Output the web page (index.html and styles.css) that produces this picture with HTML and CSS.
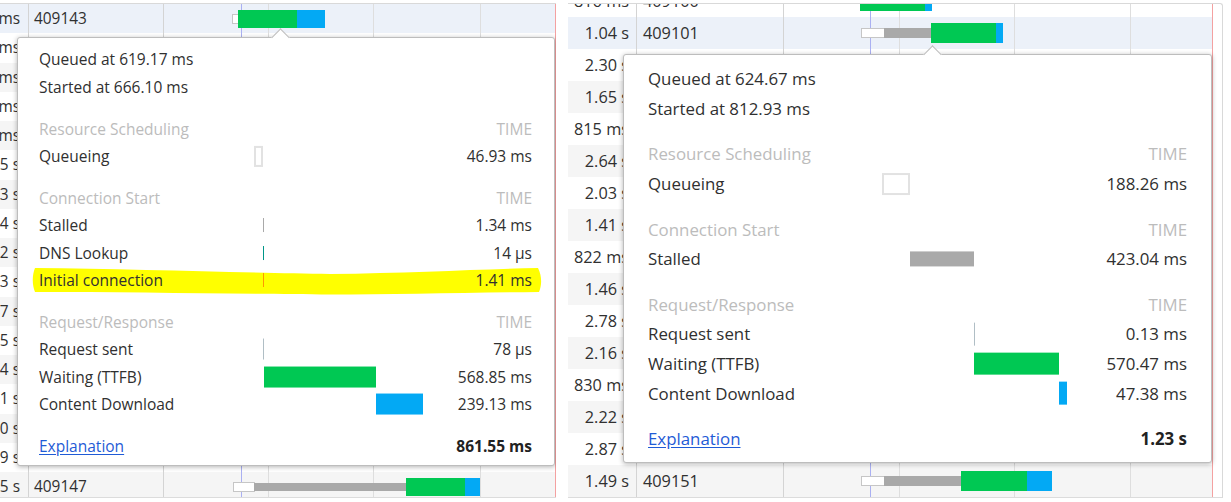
FILE: index.html
```html
<!DOCTYPE html>
<html lang="en">
<head>
<meta charset="utf-8">
<title>Network timing tooltips</title>
<link rel="stylesheet" href="styles.css">
</head>
<body>
<div class="stage">

  <section class="shot shot-a">
    <div class="rows">
      <div class="row hov">
        <div class="c-time"><span>626 ms</span></div>
        <div class="c-name">409143</div>
        <div class="c-fall">
          <i class="wb wb-q" style="left:68px;width:7px"></i>
          <i class="wb wb-w" style="left:74px;width:59px"></i>
          <i class="wb wb-d" style="left:133px;width:28px"></i>
        </div>
      </div>
      <div class="row"><div class="c-time"><span>571 ms</span></div><div class="c-name"></div><div class="c-fall"></div></div>
      <div class="row z"><div class="c-time"><span>703 ms</span></div><div class="c-name"></div><div class="c-fall"></div></div>
      <div class="row"><div class="c-time"><span>688 ms</span></div><div class="c-name"></div><div class="c-fall"></div></div>
      <div class="row z"><div class="c-time"><span>912 ms</span></div><div class="c-name"></div><div class="c-fall"></div></div>
      <div class="row"><div class="c-time"><span>1.25 s</span></div><div class="c-name"></div><div class="c-fall"></div></div>
      <div class="row z"><div class="c-time"><span>1.73 s</span></div><div class="c-name"></div><div class="c-fall"></div></div>
      <div class="row"><div class="c-time"><span>1.34 s</span></div><div class="c-name"></div><div class="c-fall"></div></div>
      <div class="row z"><div class="c-time"><span>1.52 s</span></div><div class="c-name"></div><div class="c-fall"></div></div>
      <div class="row"><div class="c-time"><span>1.63 s</span></div><div class="c-name"></div><div class="c-fall"></div></div>
      <div class="row z"><div class="c-time"><span>1.47 s</span></div><div class="c-name"></div><div class="c-fall"></div></div>
      <div class="row"><div class="c-time"><span>1.25 s</span></div><div class="c-name"></div><div class="c-fall"></div></div>
      <div class="row z"><div class="c-time"><span>1.14 s</span></div><div class="c-name"></div><div class="c-fall"></div></div>
      <div class="row"><div class="c-time"><span>1.21 s</span></div><div class="c-name"></div><div class="c-fall"></div></div>
      <div class="row z"><div class="c-time"><span>1.30 s</span></div><div class="c-name"></div><div class="c-fall"></div></div>
      <div class="row"><div class="c-time"><span>1.09 s</span></div><div class="c-name"></div><div class="c-fall"></div></div>
      <div class="row z">
        <div class="c-time"><span>1.45 s</span></div>
        <div class="c-name">409147</div>
        <div class="c-fall">
          <i class="wb wb-q" style="left:69px;width:22px"></i>
          <i class="wb wb-s" style="left:90px;width:152px"></i>
          <i class="wb wb-w" style="left:242px;width:59px"></i>
          <i class="wb wb-d" style="left:301px;width:15px"></i>
        </div>
      </div>
    </div>

    <div class="tip">
      <span class="tip-arrow"></span>
      <svg class="hl" width="510" height="30" viewBox="0 0 510 30" aria-hidden="true">
        <path d="M3 1 C 100 2, 220 6, 298 7 C 380 6, 450 2, 506 1 C 510 9, 510 18, 507 25 C 440 25.5, 360 27.5, 298 27.5 C 220 27, 100 25, 3 25 C 0 18, 0 8, 3 1 Z" fill="#ffff00"/>
      </svg>
      <div class="tl">Queued at 619.17 ms</div>
      <div class="tl">Started at 666.10 ms</div>

      <div class="tr sec"><span class="lab">Resource Scheduling</span><span></span><span class="v">TIME</span></div>
      <div class="tr"><span class="lab">Queueing</span><span class="tb"><i class="tbar q" style="left:0%;width:5.447%"></i></span><span class="v">46.93 ms</span></div>

      <div class="tr sec"><span class="lab">Connection Start</span><span></span><span class="v">TIME</span></div>
      <div class="tr"><span class="lab">Stalled</span><span class="tb"><i class="tbar s" style="left:5.2%;width:0.156%"></i></span><span class="v">1.34 ms</span></div>
      <div class="tr"><span class="lab">DNS Lookup</span><span class="tb"><i class="tbar dns" style="left:5.25%;width:0.002%"></i></span><span class="v">14 µs</span></div>
      <div class="tr"><span class="lab">Initial connection</span><span class="tb"><i class="tbar con" style="left:5.25%;width:0.164%"></i></span><span class="v">1.41 ms</span></div>

      <div class="tr sec"><span class="lab">Request/Response</span><span></span><span class="v">TIME</span></div>
      <div class="tr"><span class="lab">Request sent</span><span class="tb"><i class="tbar req" style="left:5.5%;width:0.009%"></i></span><span class="v">78 µs</span></div>
      <div class="tr"><span class="lab">Waiting (TTFB)</span><span class="tb"><i class="tbar w" style="left:5.777%;width:66.027%"></i></span><span class="v">568.85 ms</span></div>
      <div class="tr"><span class="lab">Content Download</span><span class="tb"><i class="tbar d" style="left:71.804%;width:27.756%"></i></span><span class="v">239.13 ms</span></div>

      <div class="tr foot"><a class="lab link" href="#">Explanation</a><span></span><span class="v tot">861.55 ms</span></div>
    </div>
  </section>

  <div class="gap"></div>

  <section class="shot shot-b">
    <div class="rows">
      <div class="row part">
        <div class="c-time"><span>816 ms</span></div>
        <div class="c-name">409100</div>
        <div class="c-fall">
          <i class="wb wb-w" style="left:76px;width:65px"></i>
          <i class="wb wb-d" style="left:141px;width:7px"></i>
        </div>
      </div>
      <div class="row hov">
        <div class="c-time"><span>1.04 s</span></div>
        <div class="c-name">409101</div>
        <div class="c-fall">
          <i class="wb wb-q" style="left:77px;width:24px"></i>
          <i class="wb wb-s" style="left:100px;width:47px"></i>
          <i class="wb wb-w" style="left:147px;width:65px"></i>
          <i class="wb wb-d" style="left:212px;width:7px"></i>
        </div>
      </div>
      <div class="row"><div class="c-time"><span>2.30 s</span></div><div class="c-name"></div><div class="c-fall"></div></div>
      <div class="row z"><div class="c-time"><span>1.65 s</span></div><div class="c-name"></div><div class="c-fall"></div></div>
      <div class="row"><div class="c-time"><span>815 ms</span></div><div class="c-name"></div><div class="c-fall"></div></div>
      <div class="row z"><div class="c-time"><span>2.64 s</span></div><div class="c-name"></div><div class="c-fall"></div></div>
      <div class="row"><div class="c-time"><span>2.03 s</span></div><div class="c-name"></div><div class="c-fall"></div></div>
      <div class="row z"><div class="c-time"><span>1.41 s</span></div><div class="c-name"></div><div class="c-fall"></div></div>
      <div class="row"><div class="c-time"><span>822 ms</span></div><div class="c-name"></div><div class="c-fall"></div></div>
      <div class="row z"><div class="c-time"><span>1.46 s</span></div><div class="c-name"></div><div class="c-fall"></div></div>
      <div class="row"><div class="c-time"><span>2.78 s</span></div><div class="c-name"></div><div class="c-fall"></div></div>
      <div class="row z"><div class="c-time"><span>2.16 s</span></div><div class="c-name"></div><div class="c-fall"></div></div>
      <div class="row"><div class="c-time"><span>830 ms</span></div><div class="c-name"></div><div class="c-fall"></div></div>
      <div class="row z"><div class="c-time"><span>2.22 s</span></div><div class="c-name"></div><div class="c-fall"></div></div>
      <div class="row"><div class="c-time"><span>2.87 s</span></div><div class="c-name"></div><div class="c-fall"></div></div>
      <div class="row z">
        <div class="c-time"><span>1.49 s</span></div>
        <div class="c-name">409151</div>
        <div class="c-fall">
          <i class="wb wb-q" style="left:77px;width:24px"></i>
          <i class="wb wb-s" style="left:100px;width:77px"></i>
          <i class="wb wb-w" style="left:177px;width:66px"></i>
          <i class="wb wb-d" style="left:243px;width:25px"></i>
        </div>
      </div>
    </div>

    <div class="tip">
      <span class="tip-arrow"></span>
      <div class="tl">Queued at 624.67 ms</div>
      <div class="tl">Started at 812.93 ms</div>

      <div class="tr sec"><span class="lab">Resource Scheduling</span><span></span><span class="v">TIME</span></div>
      <div class="tr"><span class="lab">Queueing</span><span class="tb"><i class="tbar q" style="left:0%;width:15.315%"></i></span><span class="v">188.26 ms</span></div>

      <div class="tr sec"><span class="lab">Connection Start</span><span></span><span class="v">TIME</span></div>
      <div class="tr"><span class="lab">Stalled</span><span class="tb"><i class="tbar s" style="left:15.315%;width:34.413%"></i></span><span class="v">423.04 ms</span></div>

      <div class="tr sec"><span class="lab">Request/Response</span><span></span><span class="v">TIME</span></div>
      <div class="tr"><span class="lab">Request sent</span><span class="tb"><i class="tbar req" style="left:49.728%;width:0.0106%"></i></span><span class="v">0.13 ms</span></div>
      <div class="tr"><span class="lab">Waiting (TTFB)</span><span class="tb"><i class="tbar w" style="left:49.739%;width:46.407%"></i></span><span class="v">570.47 ms</span></div>
      <div class="tr"><span class="lab">Content Download</span><span class="tb"><i class="tbar d" style="left:96.146%;width:3.854%"></i></span><span class="v">47.38 ms</span></div>

      <div class="tr foot"><a class="lab link" href="#">Explanation</a><span></span><span class="v tot">1.23 s</span></div>
    </div>
  </section>

</div>
</body>
</html>
```

FILE: styles.css
```css
* {
  box-sizing: border-box;
  margin: 0;
  padding: 0;
}

html,
body {
  background: #ffffff;
}

body {
  width: 1231px;
  height: 502px;
  overflow: hidden;
  font-family: "Open Sans", "Noto Sans", "DejaVu Sans", sans-serif;
  color: #303030;
}

.stage {
  display: flex;
  align-items: flex-start;
  padding-top: 3px;
}

.gap {
  flex: none;
  width: 12px;
}

/* ---------- screenshot panels ---------- */

.shot {
  position: relative;
  flex: none;
  height: 495px;
  border-top: 1px solid #d9d9d9;
  border-bottom: 1px solid #dcdcdc;
  overflow: hidden;
}

.shot-a {
  width: 556px;
  font-size: 15.4px;
  --rh: 29.25px;
  --big: 18px;
  --thin: 8px;
  --qb: 10px;
}

.shot-b {
  width: 655px;
  padding-right: 9px;
  border-right: 1px solid #d9d9d9;
  border-top-right-radius: 3px;
  font-size: 16.3px;
  --rh: 32px;
  --big: 20px;
  --thin: 10px;
  --qb: 10px;
}

.rows {
  display: flex;
  flex-direction: column;
}

.row {
  display: flex;
  flex: none;
  height: var(--rh);
  background: #ffffff;
}

.row.z {
  background: #f5f5f5;
}

.row.hov {
  background: #ecf1f9;
}

.row.part {
  margin-top: -19px;
}

.c-time {
  display: flex;
  flex: none;
  justify-content: flex-end;
  align-items: center;
  white-space: nowrap;
  overflow: hidden;
  border-right: 1px solid #d4d4d4;
}

.c-name {
  display: flex;
  flex: none;
  align-items: center;
  white-space: nowrap;
  overflow: hidden;
  border-right: 1px solid #d4d4d4;
}

.c-fall {
  position: relative;
  flex: 1;
}

.shot-a .c-time {
  width: 29px;
  padding-right: 8px;
}

.shot-a .c-name {
  width: 135px;
  padding-left: 5px;
}

.shot-a .c-fall {
  background-image: linear-gradient(to right,
      transparent 0 77px,
      #aab0f2 77px 78px,
      transparent 78px 104px,
      #dedede 104px 105px,
      transparent 105px 209px,
      #dedede 209px 210px,
      transparent 210px 316px,
      #dedede 316px 317px,
      transparent 317px 391px,
      #f4a1a1 391px 392px);
}

.shot-b .c-time {
  width: 69px;
  padding-right: 7px;
}

.shot-b .c-name {
  width: 147px;
  padding-left: 6px;
}

.shot-b .c-fall {
  flex: none;
  width: 429px;
  background-image: linear-gradient(to right,
      transparent 0 86px,
      #aab0f2 86px 87px,
      transparent 87px 115px,
      #dedede 115px 116px,
      transparent 116px 230px,
      #dedede 230px 231px,
      transparent 231px 346px,
      #dedede 346px 347px,
      transparent 347px 428px,
      #f4a1a1 428px 429px);
}

/* waterfall bars */
.wb {
  position: absolute;
  top: 50%;
  display: block;
}

.wb-q {
  height: var(--qb);
  transform: translateY(-50%);
  background: #ffffff;
  border: 1px solid #c6c6c6;
}

.wb-s {
  height: var(--thin);
  transform: translateY(-50%);
  background: #a9a9a9;
}

.wb-w {
  height: var(--big);
  transform: translateY(-50%);
  background: #00c853;
}

.wb-d {
  height: var(--big);
  transform: translateY(-50%);
  background: #03a9f4;
}

/* ---------- tooltip ---------- */

.tip {
  position: absolute;
  z-index: 5;
  background: #ffffff;
  border: 1px solid #bdbdbd;
  border-radius: 3px;
  box-shadow: 0 1px 5px rgba(0, 0, 0, 0.3);
}

.shot-a .tip {
  left: 17px;
  top: 33px;
  width: 538px;
  font-size: 15.5px;
  padding: 8.3px 22px 5.5px 21px;
}

.shot-b .tip {
  left: 55px;
  top: 50px;
  width: 589px;
  font-size: 16.85px;
  padding: 9px 24px 8.3px 24px;
}

.tip-arrow {
  position: absolute;
  top: -7.5px;
  width: 13px;
  height: 13px;
  background: #ffffff;
  border-top: 1px solid #bdbdbd;
  border-left: 1px solid #bdbdbd;
  transform: rotate(45deg);
  z-index: 2;
}

.shot-a .tip-arrow {
  left: 255.5px;
}

.shot-b .tip-arrow {
  left: 301.5px;
}

.hl {
  position: absolute;
  left: 14px;
  top: 229px;
  z-index: 0;
}

.tl {
  position: relative;
  z-index: 1;
  height: 1.768em;
  line-height: 1.768em;
  white-space: nowrap;
}

.tr {
  position: relative;
  z-index: 1;
  display: grid;
  grid-template-columns: 13.87em 10.97em 1fr;
  height: 1.768em;
  align-items: center;
  white-space: nowrap;
}

.tr.sec,
.tr.foot {
  margin-top: 0.92em;
}

.tr .v {
  text-align: right;
}

.tr.sec .lab,
.tr.sec .v {
  color: #bcbcbc;
}

.tb {
  position: relative;
  height: 100%;
}

.tbar {
  position: absolute;
  top: 50%;
  display: block;
  min-width: 1px;
  transform: translateY(-50%);
}

.tbar.q {
  height: 1.3em;
  background: #ffffff;
  border: 2px solid #e2e2e2;
}

.tbar.s {
  height: 0.9em;
  background: #a9a9a9;
}

.tbar.dns {
  height: 0.9em;
  background: #009688;
}

.tbar.con {
  height: 0.9em;
  background: #ff9800;
}

.tbar.req {
  height: 1.35em;
  background: #b0bec5;
}

.tbar.w {
  height: 1.35em;
  background: #00c853;
}

.tbar.d {
  height: 1.35em;
  background: #03a9f4;
}

.link {
  color: #1f5bd6;
  text-decoration: underline;
  text-underline-offset: 2px;
}

.tot {
  font-weight: 700;
  color: #222222;
}
```
